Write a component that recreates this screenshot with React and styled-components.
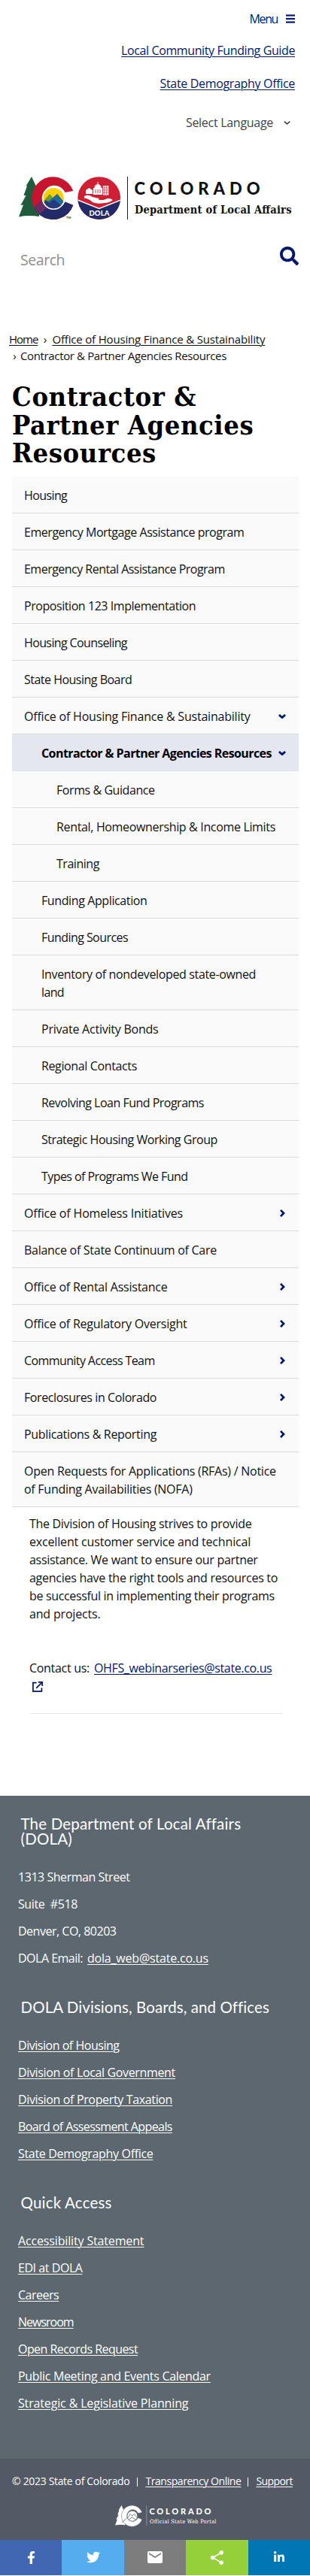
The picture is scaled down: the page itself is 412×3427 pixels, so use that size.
import React from "react";
import styled, { createGlobalStyle, css } from "styled-components";
import { FaSearch, FaFacebookF, FaTwitter, FaLinkedinIn } from "react-icons/fa";
import { MdEmail, MdShare } from "react-icons/md";

const navy = "#001970";
const sans = `"Open Sans", "Noto Sans", sans-serif`;
const slab = `"DejaVu Serif Condensed", "DejaVu Serif", serif`;

const GlobalStyle = createGlobalStyle`
  * { box-sizing: border-box; }
  body {
    margin: 0;
    background: #fff;
    color: #111;
    font-family: ${sans};
    font-stretch: 96%;
    font-size: 16px;
    line-height: 24px;
  }
`;

const spaced = css`
  letter-spacing: ${(p) => p.$ls ?? -0.35}px;
  white-space: nowrap;
`;

const Page = styled.div`
  width: 412px;
  height: 3427px;
  display: flex;
  flex-direction: column;
  overflow: hidden;
`;

const Text = styled.span`
  ${spaced}
`;

const Link = styled.a`
  ${spaced}
  color: inherit;
  text-decoration: underline;
  text-decoration-thickness: 1px;
  text-underline-offset: 2px;
`;

/* Header */

const TopLinks = styled.div`
  display: flex;
  flex-direction: column;
  align-items: flex-end;
  gap: 20px;
  padding: 13px 20px 0 0;
  color: ${navy};
`;

const MenuButton = styled.div`
  display: flex;
  align-items: center;
  gap: 11px;
  height: 24px;
  margin-bottom: -2px;
`;

const LanguageSelect = styled.div`
  display: flex;
  align-items: center;
  gap: 14px;
  height: 24px;
  margin-top: 8px;
  margin-right: 6px;
  color: #444;
`;

const LogoRow = styled.div`
  padding: 60px 0 0 25px;
  height: 118px;
`;

const SearchBar = styled.div`
  display: flex;
  justify-content: space-between;
  height: 148px;
  padding: 35px 15px 0 27px;
`;

const SearchLabel = styled(Text)`
  padding-top: 6px;
  font-size: 19.5px;
  color: #8f8f8f;
`;

const Breadcrumb = styled.div`
  padding-left: 12px;
  font-size: 15px;
  line-height: 21.6px;
`;

const Crumbs = styled.div`
  display: flex;
  align-items: center;
`;

const Separator = styled.span`
  width: ${(p) => p.$w}px;
  text-align: center;
`;

const Title = styled.h1`
  margin: 25px 0 12px 16px;
  font-family: ${slab};
  font-stretch: condensed;
  font-weight: 700;
  font-size: 36px;
  line-height: 37.5px;
  letter-spacing: 0.6px;
  color: #000;
`;

/* Section navigation */

const Nav = styled.nav`
  margin: 0 15px 0 16px;
  background: #fafafa;
`;

const NavRow = styled.div`
  display: flex;
  align-items: center;
  justify-content: space-between;
  padding: 13px 17px 11px ${(p) => [16, 39, 59][p.$level]}px;
  border-bottom: 1px solid #d9d9d9;
  ${(p) =>
    p.$active &&
    css`
      background: #e4e7f0;
      border-bottom-color: #dfe2ea;
      font-weight: 700;
      color: #000;
    `}
`;

const NavLabel = styled.div`
  display: flex;
  flex-direction: column;
`;

/* Article */

const Article = styled.div`
  height: 384px;
  padding: 10px 36px 0 39px;
`;

const Paragraph = styled.div`
  display: flex;
  flex-direction: column;
  margin-bottom: 48px;
`;

const Contact = styled.div`
  display: flex;
  gap: 6px;
  ${Link} { color: ${navy}; }
`;

const ExternalMark = styled.div`
  display: flex;
  align-items: center;
  height: 26px;
  padding-left: 4px;
`;

const Rule = styled.hr`
  margin: 22px 0 0 1px;
  border: 0;
  border-top: 1px solid #e6e6e6;
`;

/* Footer */

const Footer = styled.footer`
  height: 882px;
  padding: 27px 0 0 24px;
  background: #5c6770;
  color: #fff;
`;

const FooterHeading = styled.h2`
  margin: 0 0 29px 3.5px;
  font-family: Lato, sans-serif;
  font-stretch: normal;
  font-weight: 400;
  font-size: 20.5px;
  line-height: 20px;
  letter-spacing: ${(p) => p.$ls}px;
`;

const FooterList = styled.div`
  display: flex;
  flex-direction: column;
  align-items: flex-start;
  gap: 12px;
  margin-bottom: 43px;
`;

const Inline = styled.div`
  display: flex;
  gap: 6px;
`;

const Legal = styled.div`
  display: flex;
  flex-direction: column;
  height: 108px;
  padding-top: 18px;
  background: #545a65;
  color: #fff;
`;

const LegalLine = styled.div`
  display: flex;
  align-items: center;
  padding-left: 16px;
  height: 24px;
  font-size: 14px;
`;

const Pipe = styled.span`
  width: 1px;
  height: 12px;
  margin: 2px 10px 0 ${(p) => p.$left}px;
  background: #fff;
`;

const PortalLogo = styled.div`
  padding: 20px 0 0 153px;
`;

const ShareBar = styled.div`
  display: flex;
  height: 47px;
`;

const ShareButton = styled.div`
  flex: 1;
  display: flex;
  align-items: center;
  justify-content: center;
  background: ${(p) => p.$bg};
  color: #fff;
`;

/* Drawings */

const MenuIcon = () => (
  <svg width="12" height="12" viewBox="0 0 12 12" fill={navy}>
    <rect y="0.4" width="12" height="2.2" />
    <rect y="4.9" width="12" height="2.2" />
    <rect y="9.4" width="12" height="2.2" />
  </svg>
);

const Chevron = ({ dir = "down", color = navy, stroke = 2.7, size = 10 }) => (
  <svg width={size} height={size} viewBox="0 0 10 10" fill="none" stroke={color} strokeWidth={stroke}>
    {dir === "down" ? <path d="M0.9 3 Q3 5 5 6.6 Q7 5 9.1 3" /> : <path d="M3 0.9 Q5 3 7 5 Q5 7 3 9.1" />}
  </svg>
);

const ExternalIcon = () => (
  <svg width="14" height="14" viewBox="0 0 14 14" fill="none" stroke={navy} strokeWidth="1.7">
    <path d="M5.6 1.6 H0.9 V13.1 H12.4 V8.4" />
    <path d="M5.2 8.8 L12.4 1.6" />
    <path d="M8 0.9 H13.1 V6" />
  </svg>
);

const tree =
  "M17 0 L24 15 L22 15 L27 28 L27 53 Q12 51 0 53.5 L6 37.5 L2.5 38 L9.5 25 L6.5 25 L11 12.5 L9.5 12.5 Z";
const cShape =
  "M72.3 20.6 A28.4 28.4 0 1 0 72.3 39.6 L61.5 35 A15.5 15.5 0 1 1 61.5 22.5 Z";

const StateLogo = () => (
  <svg width="365" height="58" viewBox="0 0 365 58">
    <defs>
      <clipPath id="letter"><path d={cShape} transform="translate(0 -1.5)" /></clipPath>
      <clipPath id="sun"><circle cx="46.2" cy="28.7" r="13.6" /></clipPath>
      <clipPath id="seal"><circle cx="106.7" cy="28.6" r="28.4" /></clipPath>
    </defs>
    <path d={tree} fill="#1f5c3c" />
    <g clipPath="url(#letter)">
      <rect x="15" width="65" height="58" fill="#c8152f" />
      <path d="M15 46 L34 28 L46 28 L80 36 V58 H15 Z" fill="#232a68" />
      <path d="M15 46 L34 28 L42 38 L27 50 Z" fill="#6b2c63" />
    </g>
    <circle cx="46.2" cy="28.7" r="15.4" fill="#fff" />
    <g clipPath="url(#sun)">
      <rect x="30" y="14" width="32" height="30" fill="#ffcf06" />
      <path d="M30 36 L41 23 L46 29 L51 23 L62 36 V44 H30 Z" fill="#6e9a2d" />
      <path d="M38 34 L51 23 L62 36 V44 H34 Z" fill="#1d6a9c" />
      <path d="M30 39 L36 31 L41 35 L46 30 L56 38 L60 44 H30 Z" fill="#273a7d" />
    </g>
    <text x="63" y="56" fontFamily="Lato" fontSize="4" fontWeight="700" fill="#222">TM</text>

    <g clipPath="url(#seal)">
      <rect x="78" width="58" height="58" fill="#cf1f35" />
      <path d="M78 31 L106.7 42.5 L136 31 V58 H78 Z" fill="#232a68" />
      <path d="M78 31 L106.7 42.5 L136 31" fill="none" stroke="#fff" strokeWidth="1.4" />
    </g>
    <path d="M87 26 Q92 23 98 27 L104 28.5 Q108 29 106 31 L113 31 Q120 27 125 31 Q120 35 114 35 Q104 37 98 34 Q93 29 87 28.5 Z" fill="#fff" />
    <path d="M89 23 V18 L93.5 15 L98 18 V23 Z" fill="#fff" />
    <path d="M99 24 V15 H100.5 Q100.5 11 104.5 10 V7 H105.5 V10 Q109.5 11 109.5 15 H111 V24 Z" fill="#fff" />
    <path d="M102 17 V22 M105 17 V22 M108 17 V22" stroke="#cf1f35" strokeWidth="0.9" />
    <rect x="111.8" y="12" width="7.5" height="12.5" fill="#fff" />
    <path d="M113.8 12 V24 M116.8 12 V24 M112 15 H119 M112 18 H119 M112 21 H119" stroke="#cf1f35" strokeWidth="0.7" />
    <text x="93.5" y="51.6" fontFamily="Lato" fontSize="9.5" fontWeight="900" fill="#fff" textLength="27">DOLA</text>

    <rect x="144" y="0" width="1" height="57" fill="#222" />
    <text x="153.5" y="24.3" fontFamily="Lato" fontSize="22" fontWeight="900" fill="#111" textLength="167">COLORADO</text>
    <text x="154" y="49" fontFamily="DejaVu Serif Condensed, DejaVu Serif" fontStretch="condensed" fontSize="14.5" fontWeight="700" fill="#111" textLength="208.5">
      Department of Local Affairs
    </text>
  </svg>
);

const WebPortalLogo = () => (
  <svg width="136" height="29" viewBox="0 0 136 29">
    <g transform="scale(0.495)">
      <path d={tree} fill="#fff" />
      <path d={cShape} transform="translate(0 -1.5)" fill="#fff" stroke="#545a65" strokeWidth="1" />
      <circle cx="46.2" cy="28.7" r="14" fill="#fff" stroke="#545a65" strokeWidth="1.4" />
      <path d="M33 34 L41 23 L46 29 L51 23 L60 34 M36 40 L45 32 L56 39 M18 46 L33 33" fill="none" stroke="#545a65" strokeWidth="1.5" />
    </g>
    <rect x="41.5" y="0" width="0.8" height="27" fill="#9a9ea6" />
    <text x="45.5" y="12.2" fontFamily="Lato" fontSize="11" fontWeight="900" fill="#fff" textLength="82">COLORADO</text>
    <text x="46" y="24.3" fontFamily="DejaVu Serif Condensed, DejaVu Serif" fontStretch="condensed" fontSize="7.4" fill="#fff" textLength="88.5">
      Official State Web Portal
    </text>
  </svg>
);

/* Content: each line is [text, letter spacing] */

const navItems = [
  { level: 0, lines: [["Housing", -0.6]] },
  { level: 0, lines: [["Emergency Mortgage Assistance program", -0.46]] },
  { level: 0, lines: [["Emergency Rental Assistance Program", -0.52]] },
  { level: 0, lines: [["Proposition 123 Implementation", -0.44]] },
  { level: 0, lines: [["Housing Counseling", -0.62]] },
  { level: 0, lines: [["State Housing Board", -0.51]] },
  { level: 0, icon: "down", lines: [["Office of Housing Finance & Sustainability", -0.21]] },
  { level: 1, icon: "down", active: true, lines: [["Contractor & Partner Agencies Resources", -0.58]] },
  { level: 2, lines: [["Forms & Guidance", -0.43]] },
  { level: 2, lines: [["Rental, Homeownership & Income Limits", -0.34]] },
  { level: 2, lines: [["Training", -0.46]] },
  { level: 1, lines: [["Funding Application", -0.39]] },
  { level: 1, lines: [["Funding Sources", -0.56]] },
  { level: 1, lines: [["Inventory of nondeveloped state-owned", -0.36], ["land", -0.63]] },
  { level: 1, lines: [["Private Activity Bonds", -0.23]] },
  { level: 1, lines: [["Regional Contacts", -0.37]] },
  { level: 1, lines: [["Revolving Loan Fund Programs", -0.51]] },
  { level: 1, lines: [["Strategic Housing Working Group", -0.46]] },
  { level: 1, lines: [["Types of Programs We Fund", -0.57]] },
  { level: 0, icon: "right", lines: [["Office of Homeless Initiatives", -0.17]] },
  { level: 0, lines: [["Balance of State Continuum of Care", -0.28]] },
  { level: 0, icon: "right", lines: [["Office of Rental Assistance", -0.23]] },
  { level: 0, icon: "right", lines: [["Office of Regulatory Oversight", -0.23]] },
  { level: 0, icon: "right", lines: [["Community Access Team", -0.6]] },
  { level: 0, icon: "right", lines: [["Foreclosures in Colorado", -0.4]] },
  { level: 0, icon: "right", lines: [["Publications & Reporting", -0.32]] },
  {
    level: 0,
    lines: [["Open Requests for Applications (RFAs) / Notice", -0.25], ["of Funding Availabilities (NOFA)", -0.27]],
  },
];

const intro = [
  ["The Division of Housing strives to provide", -0.31],
  ["excellent customer service and technical", -0.17],
  ["assistance. We want to ensure our partner", -0.3],
  ["agencies have the right tools and resources to", -0.27],
  ["be successful in implementing their programs", -0.34],
  ["and projects.", -0.18],
];

const divisions = [
  ["Division of Housing", -0.47],
  ["Division of Local Government", -0.35],
  ["Division of Property Taxation", -0.35],
  ["Board of Assessment Appeals", -0.59],
  ["State Demography Office", -0.33],
];

const quickLinks = [
  ["Accessibility Statement", -0.15],
  ["EDI at DOLA", -0.45],
  ["Careers", -0.52],
  ["Newsroom", -1],
  ["Open Records Request", -0.56],
  ["Public Meeting and Events Calendar", -0.32],
  ["Strategic & Legislative Planning", -0.15],
];

export default function App() {
  return (
    <Page>
      <GlobalStyle />
      <TopLinks>
        <MenuButton>
          <Text $ls={-1.4}>Menu</Text>
          <MenuIcon />
        </MenuButton>
        <Link $ls={-0.39}>Local Community Funding Guide</Link>
        <Link $ls={-0.33}>State Demography Office</Link>
        <LanguageSelect>
          <Text $ls={-0.29}>Select Language</Text>
          <Chevron color="#444" stroke={1.8} size={9} />
        </LanguageSelect>
      </TopLinks>
      <LogoRow>
        <StateLogo />
      </LogoRow>
      <SearchBar>
        <SearchLabel $ls={-0.45}>Search</SearchLabel>
        <FaSearch size={25} color={navy} />
      </SearchBar>
      <Breadcrumb>
        <Crumbs>
          <Link $ls={-1}>Home</Link>
          <Separator $w={19}>›</Separator>
          <Link $ls={-0.17}>Office of Housing Finance &amp; Sustainability</Link>
        </Crumbs>
        <Crumbs>
          <Separator $w={15}>›</Separator>
          <Text $ls={-0.36}>Contractor &amp; Partner Agencies Resources</Text>
        </Crumbs>
      </Breadcrumb>
      <Title>
        Contractor &amp;
        <br />
        Partner Agencies
        <br />
        Resources
      </Title>
      <Nav>
        {navItems.map((item) => (
          <NavRow key={item.lines[0][0]} $level={item.level} $active={item.active}>
            <NavLabel>
              {item.lines.map(([text, ls]) => (
                <Text key={text} $ls={ls}>{text}</Text>
              ))}
            </NavLabel>
            {item.icon && <Chevron dir={item.icon} />}
          </NavRow>
        ))}
      </Nav>
      <Article>
        <Paragraph>
          {intro.map(([text, ls]) => (
            <Text key={text} $ls={ls}>{text}</Text>
          ))}
        </Paragraph>
        <Contact>
          <Text $ls={-0.3}>Contact us:</Text>
          <Link $ls={-0.35}>OHFS_webinarseries@state.co.us</Link>
        </Contact>
        <ExternalMark>
          <ExternalIcon />
        </ExternalMark>
        <Rule />
      </Article>
      <Footer>
        <FooterHeading $ls={0.18}>
          The Department of Local Affairs
          <br />
          (DOLA)
        </FooterHeading>
        <FooterList>
          <Text $ls={-0.46}>1313 Sherman Street</Text>
          <Text $ls={-0.4}>Suite&nbsp; #518</Text>
          <Text $ls={-0.49}>Denver, CO, 80203</Text>
          <Inline>
            <Text $ls={-0.51}>DOLA Email:</Text>
            <Link $ls={-0.2}>dola_web@state.co.us</Link>
          </Inline>
        </FooterList>
        <FooterHeading $ls={0.07}>DOLA Divisions, Boards, and Offices</FooterHeading>
        <FooterList>
          {divisions.map(([text, ls]) => (
            <Link key={text} $ls={ls}>{text}</Link>
          ))}
        </FooterList>
        <FooterHeading $ls={0.2}>Quick Access</FooterHeading>
        <FooterList>
          {quickLinks.map(([text, ls]) => (
            <Link key={text} $ls={ls}>{text}</Link>
          ))}
        </FooterList>
      </Footer>
      <Legal>
        <LegalLine>
          <Text $ls={-0.33}>© 2023 State of Colorado</Text>
          <Pipe $left={10} />
          <Link $ls={-0.44}>Transparency Online</Link>
          <Pipe $left={9} />
          <Link $ls={-0.58}>Support</Link>
        </LegalLine>
        <PortalLogo>
          <WebPortalLogo />
        </PortalLogo>
      </Legal>
      <ShareBar>
        <ShareButton $bg="#4267b2"><FaFacebookF size={17} /></ShareButton>
        <ShareButton $bg="#55acee"><FaTwitter size={18} /></ShareButton>
        <ShareButton $bg="#7d7d7d"><MdEmail size={24} /></ShareButton>
        <ShareButton $bg="#95d03a"><MdShare size={23} /></ShareButton>
        <ShareButton $bg="#0077b5"><FaLinkedinIn size={16} /></ShareButton>
      </ShareBar>
    </Page>
  );
}
